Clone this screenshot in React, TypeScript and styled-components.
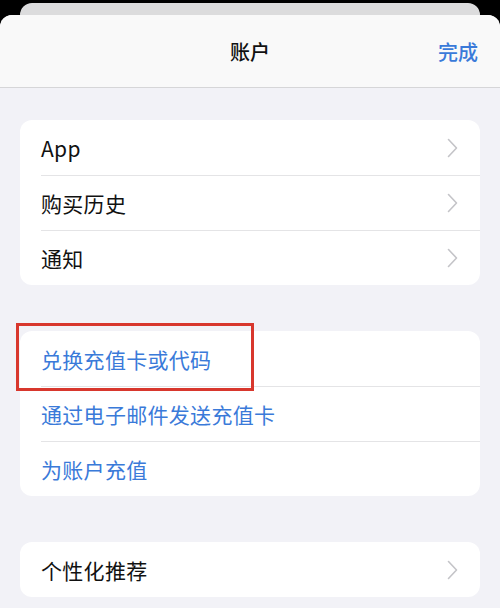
import styled, { createGlobalStyle } from "styled-components";

const GlobalStyle = createGlobalStyle`
  html, body {
    margin: 0;
    padding: 0;
    background: #000;
  }
  body {
    font-family: "Noto Sans CJK SC", "Noto Sans", sans-serif;
    -webkit-font-smoothing: antialiased;
  }
`;

type Item = { label: string; chevron?: boolean };

const accountItems: Item[] = [
  { label: "App", chevron: true },
  { label: "购买历史", chevron: true },
  { label: "通知", chevron: true },
];

const cardItems: Item[] = [
  { label: "兑换充值卡或代码" },
  { label: "通过电子邮件发送充值卡" },
  { label: "为账户充值" },
];

const Chevron = () => (
  <svg width="13" height="22" viewBox="0 0 13 22">
    <path
      d="M2.5 2.5 L10.5 11 L2.5 19.5"
      fill="none"
      stroke="#c4c4c8"
      strokeWidth="1.6"
      strokeLinecap="round"
      strokeLinejoin="round"
    />
  </svg>
);

export default function App() {
  return (
    <>
      <GlobalStyle />
      <Screen>
        <BackCard />
        <Sheet>
          <Header>
            <Title>账户</Title>
            <Done>完成</Done>
          </Header>
          <Content>
            <Group>
              {accountItems.map((item) => (
                <Row key={item.label}>
                  <Label>{item.label}</Label>
                  {item.chevron && <Chevron />}
                </Row>
              ))}
            </Group>
            <Group>
              <Highlight />
              {cardItems.map((item) => (
                <Row key={item.label}>
                  <Label $blue>{item.label}</Label>
                </Row>
              ))}
            </Group>
            <Group>
              <Row>
                <Label>个性化推荐</Label>
                <Chevron />
              </Row>
            </Group>
          </Content>
        </Sheet>
      </Screen>
    </>
  );
}

const Screen = styled.div`
  width: 500px;
  height: 608px;
  overflow: hidden;
  background: #000;
  padding-top: 3px;
  box-sizing: border-box;
`;

const BackCard = styled.div`
  height: 12px;
  margin: 0 20px;
  background: #dcdcdd;
  border-radius: 12px 12px 0 0;
`;

const Sheet = styled.div`
  background: #f2f2f7;
  border-radius: 12px 12px 0 0;
  overflow: hidden;
  height: 593px;
`;

const Header = styled.div`
  position: relative;
  height: 72px;
  background: #f9f9f9;
  border-bottom: 1px solid #d6d6d8;
  display: flex;
  align-items: center;
  justify-content: center;
`;

const Title = styled.div`
  font-size: 20px;
  font-weight: 500;
  color: #111;
`;

const Done = styled.div`
  position: absolute;
  right: 22px;
  top: 50%;
  transform: translateY(-50%);
  font-size: 20px;
  font-weight: 500;
  color: #3a7ad9;
`;

const Content = styled.div`
  padding: 32px 20px 0;
  display: flex;
  flex-direction: column;
  gap: 46px;
`;

const Group = styled.div`
  position: relative;
  background: #fff;
  border-radius: 12px;
  padding-left: 21px;
`;

const Row = styled.div`
  height: 55px;
  display: flex;
  align-items: center;
  justify-content: space-between;
  padding-right: 21px;
  box-sizing: border-box;
  & + & {
    border-top: 1px solid #e4e4e6;
  }
`;

const Label = styled.span<{ $blue?: boolean }>`
  font-size: 21px;
  color: ${(p) => (p.$blue ? "#3a7ad9" : "#111")};
  letter-spacing: 0.3px;
`;

const Highlight = styled.div`
  position: absolute;
  left: -4px;
  top: -8px;
  width: 238px;
  height: 68px;
  border: 3px solid #d8372d;
  box-sizing: border-box;
  pointer-events: none;
`;
